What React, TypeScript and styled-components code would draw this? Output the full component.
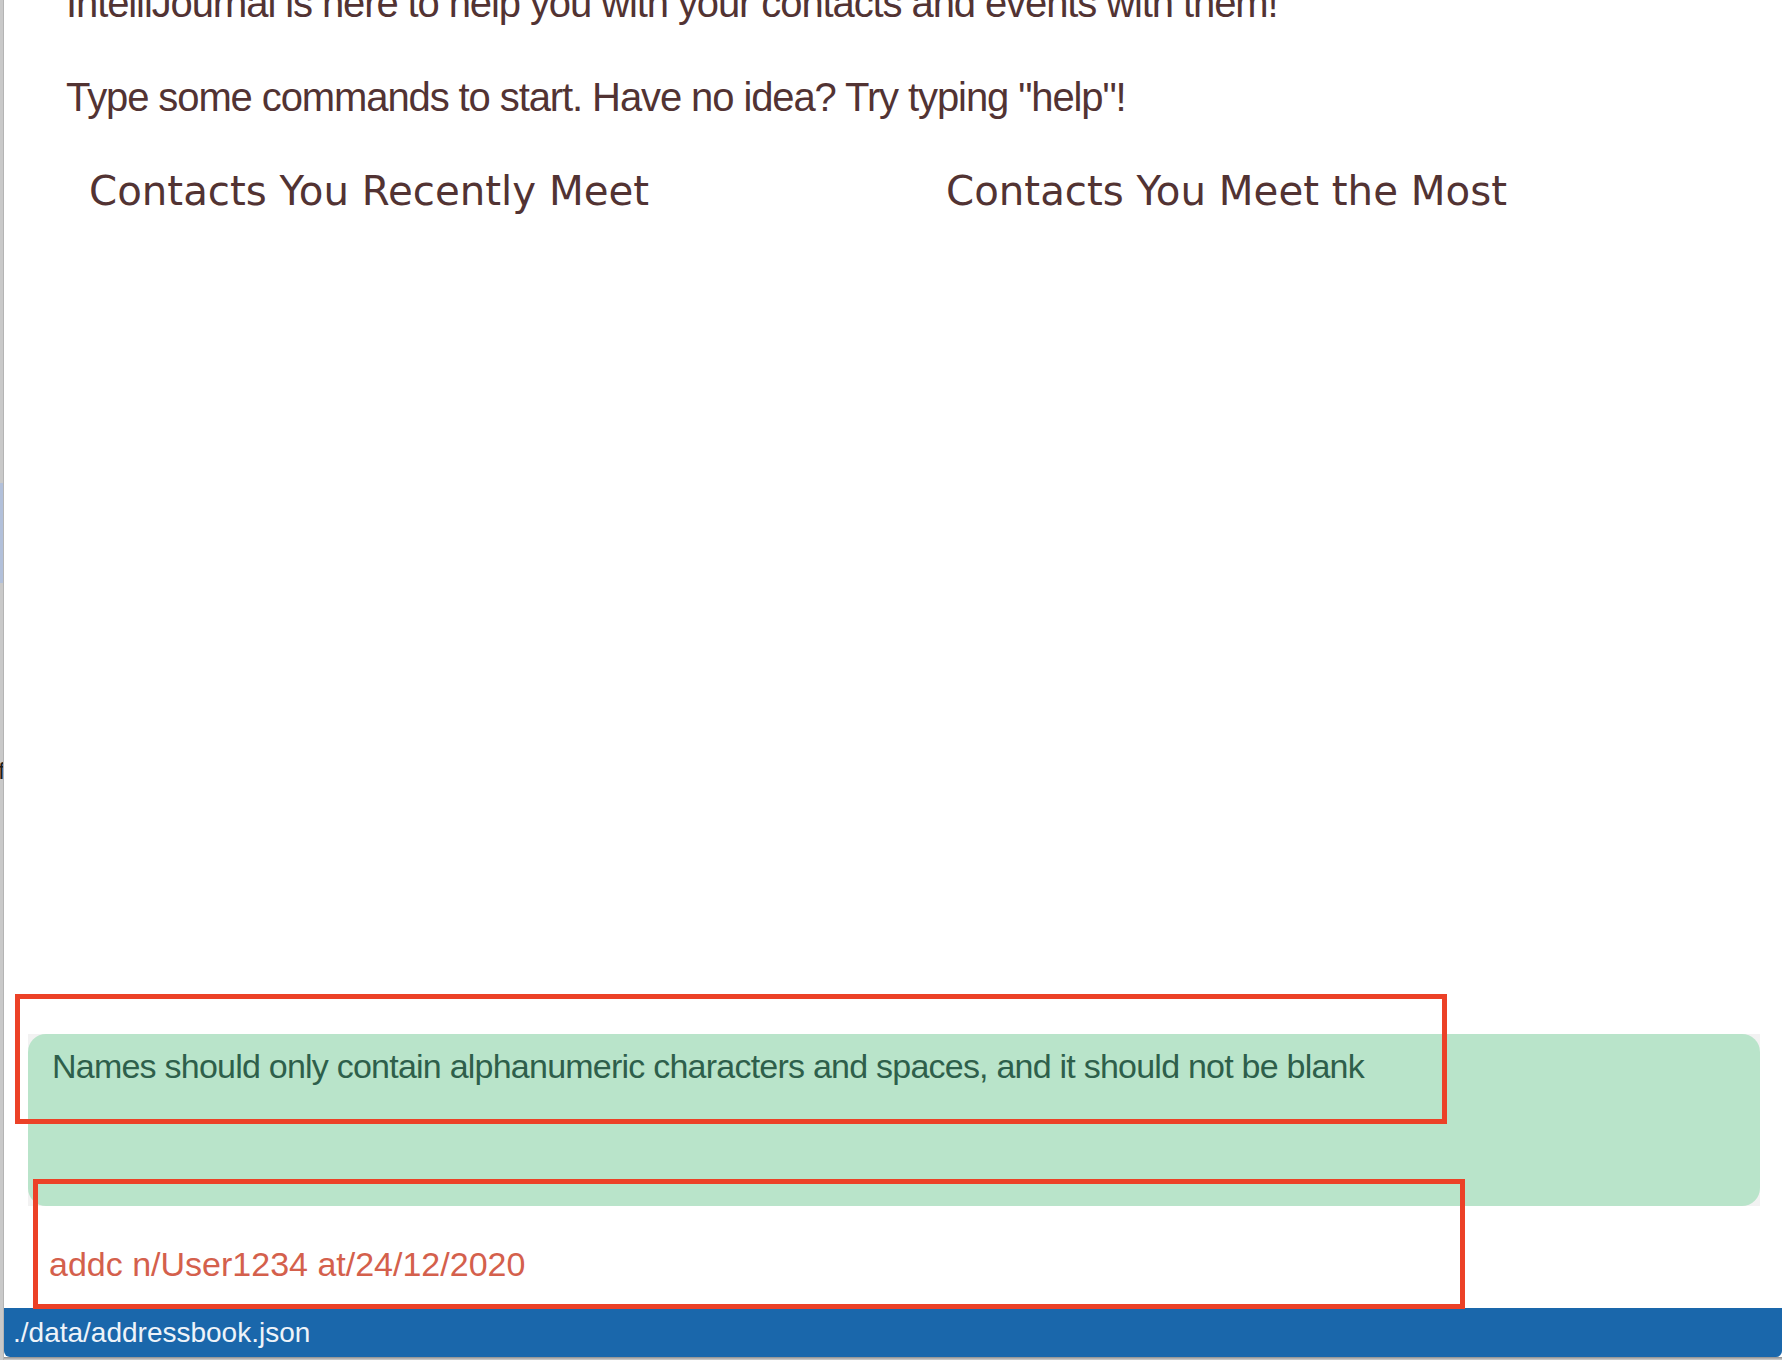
import React from 'react';
import styled, { createGlobalStyle } from 'styled-components';

const GlobalStyle = createGlobalStyle`
  html, body {
    margin: 0;
    padding: 0;
    background: #ffffff;
    overflow: hidden;
  }
`;

const Root = styled.div`
  position: relative;
  display: flex;
  width: 1782px;
  height: 1360px;
  overflow: hidden;
  background: #ffffff;
`;

const BackdropEdge = styled.div`
  position: relative;
  flex: 0 0 4px;
  display: flex;
  flex-direction: column;
  background: #c9c9c9;
  border-right: 1px solid #b4b4b4;
  box-sizing: border-box;
  overflow: hidden;
`;

const EdgeGap = styled.div<{ $h: number }>`
  flex: 0 0 ${(p) => p.$h}px;
`;

const EdgeHighlight = styled.div`
  flex: 0 0 100px;
  background: #b2c0da;
`;

const EdgeGlyph = styled.div`
  flex: 0 0 24px;
  display: flex;
  justify-content: flex-end;
  font-family: 'Liberation Sans', sans-serif;
  font-size: 24px;
  line-height: 24px;
  color: #1d1d1d;
  margin-right: -2px;
`;

const Window = styled.div`
  flex: 1;
  display: flex;
  flex-direction: column;
  min-width: 0;
`;

const MainPane = styled.div`
  flex: 1;
  padding-left: 62px;
  overflow: hidden;
`;

const Welcome = styled.div`
  margin-top: -20px;
  font-family: 'Liberation Sans', Arial, sans-serif;
  font-size: 40px;
  line-height: 47px;
  letter-spacing: -1.1px;
  color: #523333;
  white-space: pre-line;
`;

const Columns = styled.div`
  display: flex;
  margin-top: 47px;
  padding-left: 23px;
`;

const Column = styled.div`
  flex: 0 0 857px;
`;

const ColumnTitle = styled.div`
  font-family: 'DejaVu Sans', Verdana, sans-serif;
  font-size: 40.3px;
  line-height: 47px;
  color: #523333;
  white-space: nowrap;
`;

const ResultWrap = styled.div`
  flex: 0 0 172px;
  margin: 0 22px 0 24px;
  background: #f2f2f2;
`;

const ResultBox = styled.div`
  height: 100%;
  box-sizing: border-box;
  padding: 13px 24px 0;
  background: #b9e4ca;
  border-radius: 18px;
  font-family: 'Liberation Sans', Arial, sans-serif;
  font-size: 34px;
  line-height: 39px;
  letter-spacing: -0.77px;
  color: #2e5f4b;
  white-space: nowrap;
`;

const CommandBox = styled.div`
  flex: 0 0 102px;
  box-sizing: border-box;
  padding: 39px 0 0 45px;
  font-family: 'Liberation Sans', Arial, sans-serif;
  font-size: 34px;
  line-height: 39px;
  color: #d4604c;
  white-space: nowrap;
`;

const StatusBar = styled.div`
  flex: 0 0 49px;
  display: flex;
  align-items: center;
  padding-left: 9px;
  background: #1a67ab;
  border-radius: 0 0 6px 6px;
  font-family: 'Liberation Sans', Arial, sans-serif;
  font-size: 28px;
  line-height: 32px;
  color: #eef3f9;
`;

const BottomShadow = styled.div`
  flex: 0 0 3px;
  background: linear-gradient(#8e8e8e, #d0d0d0);
`;

const Annotation = styled.div<{ $left: number; $top: number }>`
  position: absolute;
  left: ${(p) => p.$left}px;
  top: ${(p) => p.$top}px;
  width: 1432px;
  height: 130px;
  box-sizing: border-box;
  border: 5px solid #ec4127;
  pointer-events: none;
`;

const App: React.FC = () => {
  return (
    <>
      <GlobalStyle />
      <Root>
        <BackdropEdge>
          <EdgeGap $h={483} />
          <EdgeHighlight />
          <EdgeGap $h={176} />
          <EdgeGlyph>f</EdgeGlyph>
        </BackdropEdge>
        <Window>
          <MainPane>
            <Welcome>
              {'IntelliJournal is here to help you with your contacts and events with them!\n\nType some commands to start. Have no idea? Try typing "help"!'}
            </Welcome>
            <Columns>
              <Column>
                <ColumnTitle>Contacts You Recently Meet</ColumnTitle>
              </Column>
              <Column>
                <ColumnTitle>Contacts You Meet the Most</ColumnTitle>
              </Column>
            </Columns>
          </MainPane>
          <ResultWrap>
            <ResultBox>
              Names should only contain alphanumeric characters and spaces, and it should not be blank
            </ResultBox>
          </ResultWrap>
          <CommandBox>addc n/User1234 at/24/12/2020</CommandBox>
          <StatusBar>./data/addressbook.json</StatusBar>
          <BottomShadow />
        </Window>
        <Annotation $left={15} $top={994} />
        <Annotation $left={33} $top={1179} />
      </Root>
    </>
  );
};

export default App;
